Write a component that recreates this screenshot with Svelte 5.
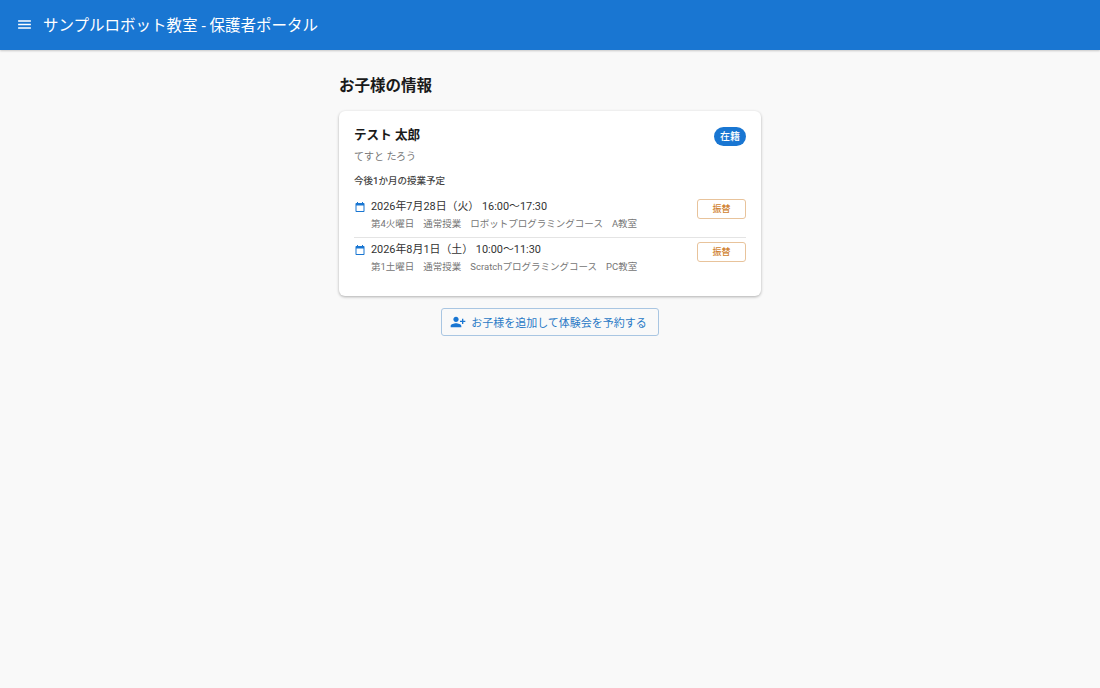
<script>
	const lessons = [
		{
			date: '2026年7月28日（火） 16:00〜17:30',
			detail: ['第4火曜日', '通常授業', 'ロボットプログラミングコース', 'A教室']
		},
		{
			date: '2026年8月1日（土） 10:00〜11:30',
			detail: ['第1土曜日', '通常授業', 'Scratchプログラミングコース', 'PC教室']
		}
	];
</script>

<header class="appbar">
	<svg class="menu" viewBox="0 0 24 24" aria-hidden="true">
		<path d="M3 18h18v-2H3v2zm0-5h18v-2H3v2zm0-7v2h18V6H3z" />
	</svg>
	<h1>サンプルロボット教室 - 保護者ポータル</h1>
</header>

<main class="page">
	<h2>お子様の情報</h2>

	<section class="card">
		<div class="card-head">
			<div>
				<div class="name">テスト 太郎</div>
				<div class="kana">てすと たろう</div>
			</div>
			<span class="chip">在籍</span>
		</div>

		<div class="label">今後1か月の授業予定</div>

		<ul class="lessons">
			{#each lessons as lesson}
				<li class="lesson">
					<svg class="cal" viewBox="0 0 24 24" aria-hidden="true">
						<path
							d="M19 4h-1V2h-2v2H8V2H6v2H5c-1.1 0-2 .9-2 2v14c0 1.1.9 2 2 2h14c1.1 0 2-.9 2-2V6c0-1.1-.9-2-2-2zm0 16H5V9h14v11z"
						/>
					</svg>
					<div class="lesson-text">
						<div class="date">{lesson.date}</div>
						<div class="detail">
							{#each lesson.detail as part}
								<span>{part}</span>
							{/each}
						</div>
					</div>
					<button class="swap" type="button">振替</button>
				</li>
			{/each}
		</ul>
	</section>

	<div class="actions">
		<button class="add" type="button">
			<svg viewBox="0 0 24 24" aria-hidden="true">
				<path
					d="M15 12c2.21 0 4-1.79 4-4s-1.79-4-4-4-4 1.79-4 4 1.79 4 4 4zm-9-2V7H4v3H1v2h3v3h2v-3h3v-2H6zm9 4c-2.67 0-8 1.34-8 4v2h16v-2c0-2.66-5.33-4-8-4z"
					transform="matrix(-1 0 0 1 24 0)"
				/>
			</svg>
			お子様を追加して体験会を予約する
		</button>
	</div>
</main>

<style>
	:global(body) {
		background: #f9f9f9;
		font-family: Roboto, 'Noto Sans CJK JP', sans-serif;
		color: #1a1a1a;
	}

	.appbar {
		display: flex;
		align-items: center;
		gap: 10px;
		height: 50px;
		box-sizing: border-box;
		padding: 0 16px 2px;
		background: #1976d2;
		color: #fff;
		box-shadow: 0 1px 2px rgba(0, 0, 0, 0.2);
	}

	.menu {
		width: 17px;
		height: 17px;
		fill: currentColor;
	}

	h1 {
		margin: 0;
		font-size: 15.5px;
		font-weight: 400;
	}

	.page {
		width: 422px;
		margin: 0 auto;
		padding-top: 26px;
	}

	h2 {
		margin: 0 0 14px;
		font-size: 15.5px;
		line-height: 21px;
		font-weight: 700;
	}

	.card {
		background: #fff;
		border-radius: 6px;
		box-shadow: 0 1px 3px rgba(0, 0, 0, 0.3);
		padding: 15px 15px 16px;
	}

	.card-head {
		display: flex;
		justify-content: space-between;
		align-items: flex-start;
	}

	.name {
		font-size: 12.6px;
		line-height: 18px;
		font-weight: 700;
	}

	.kana {
		margin-top: 5px;
		font-size: 10px;
		line-height: 16px;
		color: #757575;
	}

	.chip {
		margin-top: 1px;
		padding: 0 6px;
		height: 19px;
		border-radius: 10px;
		background: #1976d2;
		color: #fff;
		font-size: 10px;
		font-weight: 500;
		line-height: 19px;
	}

	.label {
		margin-top: 9px;
		font-size: 9.5px;
		line-height: 14px;
		font-weight: 500;
		color: #444;
	}

	.lessons {
		list-style: none;
		margin: 7px 0 0;
		padding: 0;
	}

	.lesson {
		display: flex;
		align-items: flex-start;
		gap: 5px;
		padding: 4px 0 5px;
	}

	.lesson + .lesson {
		border-top: 1px solid #e4e4e4;
	}

	.cal {
		flex: none;
		width: 12px;
		height: 12px;
		margin-top: 2px;
		fill: #1976d2;
	}

	.lesson-text {
		flex: 1;
	}

	.date {
		font-size: 10.9px;
		line-height: 16px;
		color: #333;
	}

	.detail {
		display: flex;
		gap: 9px;
		font-size: 9.5px;
		line-height: 17px;
		color: #757575;
	}

	.swap {
		flex: none;
		width: 49px;
		height: 20px;
		padding: 0 0 1px;
		border: 1px solid #e8c39b;
		border-radius: 3px;
		background: #fff;
		color: #cf7f2e;
		font: inherit;
		font-size: 9px;
		font-weight: 500;
	}

	.actions {
		display: flex;
		justify-content: center;
		margin-top: 12px;
	}

	.add {
		display: flex;
		align-items: center;
		gap: 5px;
		height: 28px;
		padding: 0 11px 0 8px;
		border: 1px solid #a9c6e2;
		border-radius: 3px;
		background: transparent;
		color: #2a7ac6;
		font: inherit;
		font-size: 11px;
	}

	.add svg {
		width: 16px;
		height: 16px;
		fill: #1976d2;
	}
</style>
